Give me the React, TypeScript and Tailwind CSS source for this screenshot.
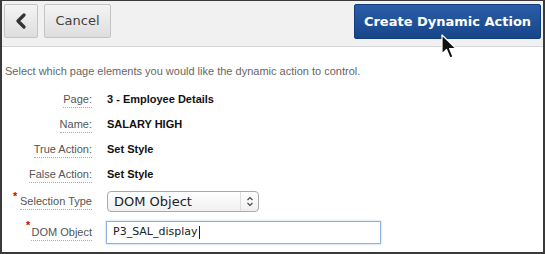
import React from "react";

function Row({ label, value }: { label: string; value: string }) {
  return (
    <div className="flex items-center h-[25px]">
      <div className="w-[90px] text-right">
        <span className="border-b border-dotted border-[#aaa] text-[#555] pb-[2px]">{label}:</span>
      </div>
      <div className="ml-[15px] font-bold text-[#111]">{value}</div>
    </div>
  );
}

export default function App() {
  return (
    <div
      className="w-[545px] h-[254px] box-border border-t border-x-2 border-b-2 border-[#3a3a3a] bg-white overflow-hidden relative"
      style={{ fontFamily: '"Liberation Sans", Arial, sans-serif' }}
    >
      {/* barra de botões */}
      <div className="h-[46px] bg-[#f1f1f1] border-b border-[#d6d6d6] flex items-start pt-[3px] px-[2px]">
        <button className="w-[34px] h-[34px] rounded-[2px] border border-[#c4c4c4] bg-gradient-to-b from-[#f4f4f4] to-[#dedede] flex items-center justify-center">
          <svg width="12" height="16" viewBox="0 0 12 16">
            <path d="M9 2 L3 8 L9 14" fill="none" stroke="#333" strokeWidth="3.2" strokeLinecap="round" strokeLinejoin="round" />
          </svg>
        </button>
        <button
          className="ml-[6px] w-[67px] h-[34px] rounded-[2px] border border-[#c4c4c4] bg-gradient-to-b from-[#f4f4f4] to-[#dedede] text-[13px] text-[#404040]"
          style={{ fontFamily: '"DejaVu Sans", sans-serif' }}
        >
          Cancel
        </button>
        <button
          className="ml-auto w-[187px] h-[35px] rounded-[2px] border border-[#123d78] bg-gradient-to-b from-[#2a5ea8] to-[#174589] text-white font-bold text-[13px]"
          style={{ fontFamily: '"DejaVu Sans", sans-serif' }}
        >
          Create Dynamic Action
        </button>
      </div>

      {/* cursor */}
      <svg className="absolute left-[439px] top-[33px]" width="18" height="26" viewBox="0 0 18 26">
        <path d="M1 1 L1 20 L5.5 15.5 L9 24 L12 22.8 L8.6 14.5 L15 14.5 Z" fill="#111" stroke="#fff" strokeWidth="1.2" strokeLinejoin="round" />
      </svg>

      <div className="text-[11px] pt-[16px] pl-[3px] text-[#666]">
        Select which page elements you would like the dynamic action to control.
      </div>

      <div className="text-[11px] mt-[7px]">
        <Row label="Page" value="3 - Employee Details" />
        <Row label="Name" value="SALARY HIGH" />
        <Row label="True Action" value="Set Style" />
        <Row label="False Action" value="Set Style" />

        <div className="flex items-center h-[28px] mt-[1px]">
          <div className="w-[90px] text-right relative">
            <span className="absolute left-[11px] -top-[5px] text-[#d00] text-[11px] font-bold">*</span>
            <span className="border-b border-dotted border-[#aaa] text-[#555] pb-[2px]">Selection Type</span>
          </div>
          <div
            className="ml-[15px] w-[152px] h-[21px] rounded-[4px] border border-[#aaa] bg-gradient-to-b from-white to-[#f0f0f0] flex items-center text-[13px] text-[#222]"
            style={{ fontFamily: '"DejaVu Sans", sans-serif' }}
          >
            <span className="flex-1 pl-[6px]">DOM Object</span>
            <span className="w-[18px] h-full border-l border-[#ddd] flex items-center justify-center">
              <svg width="8" height="11" viewBox="0 0 8 11">
                <path d="M1.5 4 L4 1.5 L6.5 4 M1.5 7 L4 9.5 L6.5 7" fill="none" stroke="#444" strokeWidth="1.1" />
              </svg>
            </span>
          </div>
        </div>

        <div className="flex items-center h-[34px]">
          <div className="w-[90px] text-right relative">
            <span className="absolute left-[24px] -top-[7px] text-[#d00] text-[11px] font-bold">*</span>
            <span className="border-b border-dotted border-[#aaa] text-[#555] pb-[2px]">DOM Object</span>
          </div>
          <div
            className="ml-[14px] w-[275px] h-[23px] border border-[#8fb2dc] shadow-[0_0_2px_#a9c6ea] bg-white flex items-center pl-[6px] text-[11px] text-[#222]"
            style={{ fontFamily: '"DejaVu Sans", sans-serif' }}
          >
            P3_SAL_display
            <span className="w-px h-[13px] bg-[#222] ml-px" />
          </div>
        </div>
      </div>
    </div>
  );
}
